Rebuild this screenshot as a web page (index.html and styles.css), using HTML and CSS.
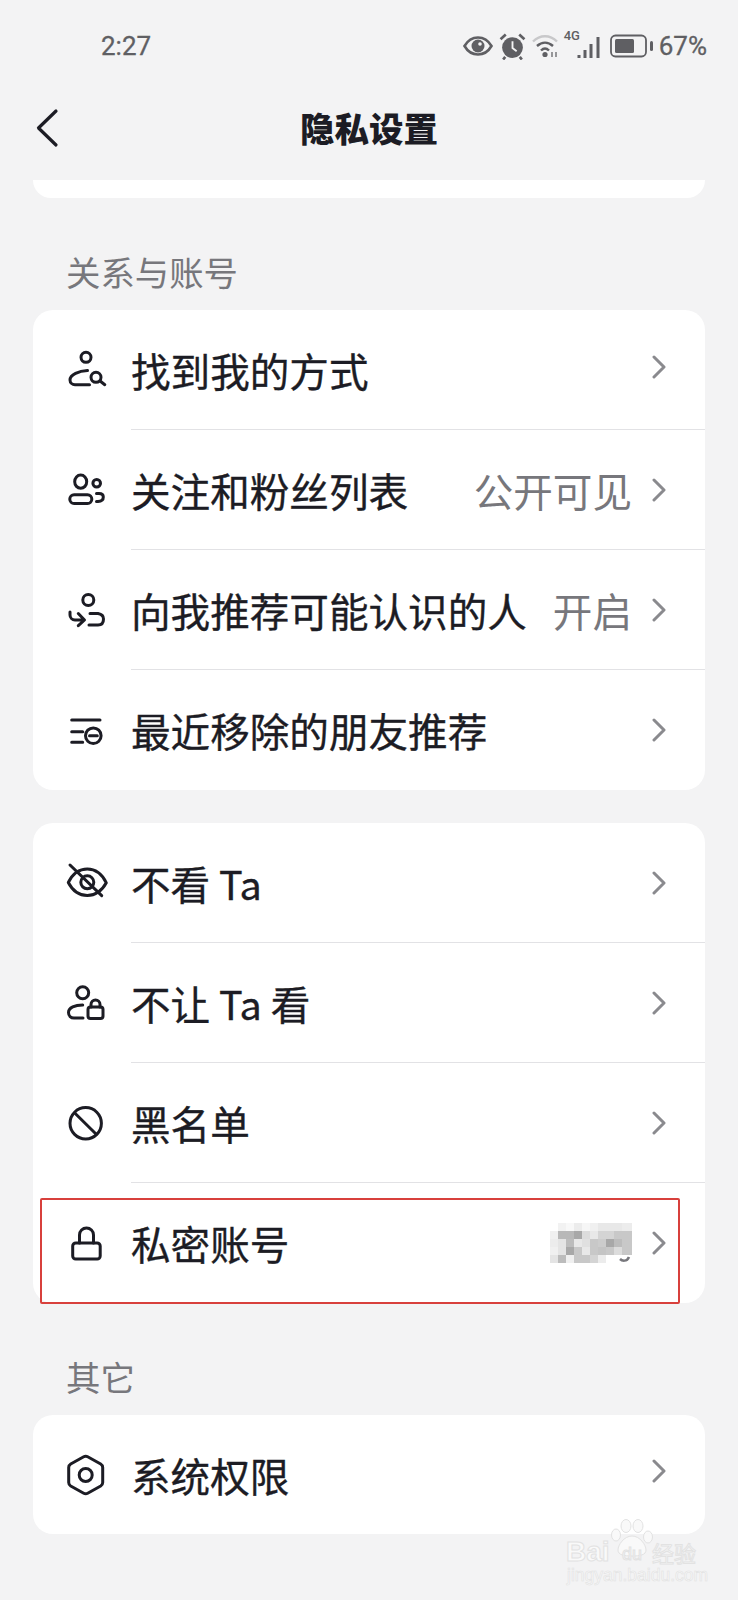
FILE: index.html
```html
<!DOCTYPE html>
<html lang="zh-CN">
<head>
<meta charset="utf-8">
<title>隐私设置</title>
<link rel="stylesheet" href="styles.css">
</head>
<body>
<div class="page">
  <header class="status">
    <span class="time">2:27</span>
    <div class="status-icons">
      <svg class="si-eye" viewBox="0 0 30 22" width="30" height="22"><path d="M1.5 11C5 5 9.500 2.500 15 2.500S25 5 28.500 11C25 17 20.500 19.500 15 19.500S5 17 1.500 11Z" fill="none" stroke="#5f5f63" stroke-width="2.600"/><circle cx="15" cy="11" r="6.500" fill="#5f5f63"/><circle cx="17" cy="9" r="1.800" fill="#f3f3f4"/></svg>
      <svg class="si-alarm" viewBox="0 0 26 26" width="27" height="27"><circle cx="13" cy="14" r="10" fill="#5f5f63"/><path d="M13 8v6.500l4 3" fill="none" stroke="#f3f3f4" stroke-width="1.800"/><path d="M1.500 6l5-4.500M24.500 6l-5-4.500M6 23l-2 2.500M20 23l2 2.500" stroke="#5f5f63" stroke-width="2.600" fill="none"/></svg>
      <svg class="si-wifi" viewBox="0 0 27 24" width="27" height="24"><path d="M1 7.500C8 .5 18 .5 25 7.500" fill="none" stroke="#c8c8ca" stroke-width="2.400"/><path d="M5 12C10 7.500 16 7.500 21 12M9 16.500C11.500 14 14.500 14 17 16.500" fill="none" stroke="#5f5f63" stroke-width="2.400"/><circle cx="13" cy="20.500" r="2.600" fill="#5f5f63"/><path d="M20 18v5M24 18v5" stroke="#6f6f73" stroke-width="1.400"/></svg>
      <div class="si-cell">
        <span class="si-4g">4G</span>
        <svg viewBox="0 0 24 24" width="24" height="24"><path d="M2 20v3M8 15v8M14 9v14M21 2v21" stroke="#5f5f63" stroke-width="3" fill="none"/></svg>
      </div>
      <svg class="si-batt" viewBox="0 0 44 24" width="44" height="24"><rect x="1" y="1.500" width="35" height="21" rx="4.500" fill="none" stroke="#5f5f63" stroke-width="1.800"/><rect x="5" y="5" width="19" height="14" rx="1.500" fill="#5f5f63"/><rect x="40" y="7" width="3" height="10" rx="1.500" fill="#5f5f63"/></svg>
      <span class="pct">67%</span>
    </div>
  </header>

  <nav class="nav">
    <svg class="back" viewBox="0 0 24 40" width="24" height="40"><path d="M21 3L3.500 20L21 37" fill="none" stroke="#1c1c24" stroke-width="3.200" stroke-linecap="round" stroke-linejoin="round"/></svg>
    <h1 class="title">隐私设置</h1>
  </nav>

  <div class="card-tail"></div>

  <h2 class="label label-first">关系与账号</h2>
  <section class="card">
    <div class="row">
      <svg class="icon" viewBox="0 0 40 40"><circle cx="19" cy="7.300" r="5"/><path d="M20.500 20.500C12 21 3 24.500 3 30C3 33 5.500 34.700 8 34.700H22.500"/><circle cx="29" cy="27.300" r="5"/><path d="M32.800 30.800L37.800 34.700"/></svg>
      <div class="row-body"><span class="row-text">找到我的方式</span><svg class="chev chev-first" viewBox="0 0 14 24"><path d="M2 2L12 12L2 22"/></svg></div>
    </div>
    <div class="row">
      <svg class="icon" viewBox="0 0 40 40"><ellipse cx="13.700" cy="11.700" rx="6" ry="6.600"/><rect x="2.800" y="24.800" width="22" height="8.700" rx="4.300"/><circle cx="29.700" cy="13.300" r="3.800"/><path d="M29.500 23.500H32Q36.300 23.500 36.300 27Q36.300 31.300 31 31.500H29.500"/></svg>
      <div class="row-body"><span class="row-text">关注和粉丝列表</span><span class="row-val">公开可见</span><svg class="chev" viewBox="0 0 14 24"><path d="M2 2L12 12L2 22"/></svg></div>
    </div>
    <div class="row">
      <svg class="icon" viewBox="0 0 40 40"><circle cx="21.300" cy="10" r="5.500"/><path d="M23 23.500H31Q36.500 24.500 36.500 29Q36.500 35 31 35H22"/><path d="M3 22V25A5 5 0 0 0 8 30H17M11.300 23.500L17.500 30L11.300 35.700"/></svg>
      <div class="row-body"><span class="row-text">向我推荐可能认识的人</span><span class="row-val">开启</span><svg class="chev" viewBox="0 0 14 24"><path d="M2 2L12 12L2 22"/></svg></div>
    </div>
    <div class="row">
      <svg class="icon" viewBox="0 0 40 40"><path d="M4.700 10H33M4.700 21.700H15.700M4.700 32.300H15.700"/><circle cx="26.300" cy="25.700" r="7.800"/><path d="M22.500 25.700H30.300"/></svg>
      <div class="row-body row-body-last"><span class="row-text">最近移除的朋友推荐</span><svg class="chev" viewBox="0 0 14 24"><path d="M2 2L12 12L2 22"/></svg></div>
    </div>
  </section>

  <section class="card card-second">
    <div class="row">
      <svg class="icon" viewBox="0 0 40 40"><path d="M1.300 19.500C6 10 12.500 6 20.300 6S34.500 10 39.300 19.800C34.500 28.500 28 32.500 20.300 32.500S6 28.500 1.300 19.500Z"/><circle cx="20.300" cy="19.300" r="6.500"/><path d="M3 2L34.700 32.700"/></svg>
      <div class="row-body"><span class="row-text">不看 Ta</span><svg class="chev" viewBox="0 0 14 24"><path d="M2 2L12 12L2 22"/></svg></div>
    </div>
    <div class="row">
      <svg class="icon" viewBox="0 0 40 40"><circle cx="15.700" cy="9.700" r="6"/><path d="M15.700 22C8 22 1.500 24.500 1.500 29.500C1.500 33 4 35 7 35H16"/><rect x="21" y="24" width="15" height="11.500" rx="2.500"/><path d="M24 24V21.500A4.500 4.500 0 0 1 33 21.500V24"/></svg>
      <div class="row-body"><span class="row-text">不让 Ta 看</span><svg class="chev" viewBox="0 0 14 24"><path d="M2 2L12 12L2 22"/></svg></div>
    </div>
    <div class="row">
      <svg class="icon" viewBox="0 0 40 40"><circle cx="18.700" cy="20.300" r="15.700"/><path d="M8 10.300L29 31"/></svg>
      <div class="row-body"><span class="row-text">黑名单</span><svg class="chev" viewBox="0 0 14 24"><path d="M2 2L12 12L2 22"/></svg></div>
    </div>
    <div class="row">
      <svg class="icon" viewBox="0 0 40 40"><rect x="5.700" y="20" width="27.500" height="16" rx="3"/><path d="M12.500 20V12A7 7 0 0 1 26.500 12V20"/></svg>
      <div class="row-body row-body-last">
        <span class="row-text">私密账号</span>
        <svg class="mosaic" viewBox="0 0 82 40" width="82" height="40" aria-hidden="true">
          <g>
            <rect x="8" y="0" width="8" height="8" fill="#f2f2f2"/><rect x="16" y="0" width="8" height="8" fill="#f8f8f8"/><rect x="24" y="0" width="8" height="8" fill="#ececec"/><rect x="32" y="0" width="8" height="8" fill="#f6f6f6"/><rect x="40" y="0" width="8" height="8" fill="#f0f0f0"/><rect x="48" y="0" width="8" height="8" fill="#e8e8e8"/><rect x="56" y="0" width="8" height="8" fill="#e8e8e8"/><rect x="64" y="0" width="8" height="8" fill="#e8e8e8"/><rect x="72" y="0" width="10" height="8" fill="#ececec"/>
            <rect x="0" y="8" width="8" height="8" fill="#f0f0f0"/><rect x="8" y="8" width="8" height="8" fill="#b8b8b8"/><rect x="16" y="8" width="8" height="8" fill="#b8b8b8"/><rect x="24" y="8" width="8" height="8" fill="#a8a8a8"/><rect x="32" y="8" width="8" height="8" fill="#dcdcdc"/><rect x="40" y="8" width="8" height="8" fill="#e8e8e8"/><rect x="48" y="8" width="8" height="8" fill="#d4d4d4"/><rect x="56" y="8" width="8" height="8" fill="#d4d4d4"/><rect x="64" y="8" width="8" height="8" fill="#c8c8c8"/><rect x="72" y="8" width="10" height="8" fill="#c8c8c8"/>
            <rect x="0" y="16" width="8" height="8" fill="#ececec"/><rect x="8" y="16" width="8" height="8" fill="#e4e4e4"/><rect x="16" y="16" width="8" height="8" fill="#bcbcbc"/><rect x="24" y="16" width="8" height="8" fill="#e8e8e8"/><rect x="32" y="16" width="8" height="8" fill="#e0e0e0"/><rect x="40" y="16" width="8" height="8" fill="#c8c8c8"/><rect x="48" y="16" width="8" height="8" fill="#cccccc"/><rect x="56" y="16" width="8" height="8" fill="#a8a8a8"/><rect x="64" y="16" width="8" height="8" fill="#bcbcbc"/><rect x="72" y="16" width="10" height="8" fill="#c8c8c8"/>
            <rect x="0" y="24" width="8" height="8" fill="#f0f0f0"/><rect x="8" y="24" width="8" height="8" fill="#e4e4e4"/><rect x="16" y="24" width="8" height="8" fill="#a8a8a8"/><rect x="24" y="24" width="8" height="8" fill="#c8c8c8"/><rect x="32" y="24" width="8" height="8" fill="#e8e8e8"/><rect x="40" y="24" width="8" height="8" fill="#c8c8c8"/><rect x="48" y="24" width="8" height="8" fill="#c4c4c4"/><rect x="56" y="24" width="8" height="8" fill="#c8c8c8"/><rect x="64" y="24" width="8" height="8" fill="#dcdcdc"/><rect x="72" y="24" width="10" height="8" fill="#c8c8c8"/>
            <rect x="0" y="32" width="8" height="8" fill="#e4e4e4"/><rect x="8" y="32" width="8" height="8" fill="#bcbcbc"/><rect x="16" y="32" width="8" height="8" fill="#f0f0f0"/><rect x="24" y="32" width="8" height="8" fill="#c8c8c8"/><rect x="32" y="32" width="8" height="8" fill="#c8c8c8"/><rect x="40" y="32" width="8" height="8" fill="#d4d4d4"/><rect x="48" y="32" width="8" height="8" fill="#ececec"/>
            <path d="M70 36C72 38 77 39 79 34" fill="none" stroke="#77777c" stroke-width="2.500"/>
          </g>
        </svg>
        <svg class="chev" viewBox="0 0 14 24"><path d="M2 2L12 12L2 22"/></svg>
      </div>
      <div class="highlight"></div>
    </div>
  </section>

  <h2 class="label label-other">其它</h2>
  <section class="card card-short">
    <div class="row">
      <svg class="icon" viewBox="0 0 40 40"><path d="M16.700 1.800Q18.700 .700 20.700 1.800L33.700 9Q35.700 10.200 35.700 12.500V27.500Q35.700 29.800 33.700 31L20.700 38.200Q18.700 39.300 16.700 38.200L3.700 31Q1.700 29.800 1.700 27.500V12.500Q1.700 10.200 3.700 9Z"/><circle cx="18.700" cy="20" r="6.500"/></svg>
      <div class="row-body row-body-last"><span class="row-text">系统权限</span><svg class="chev chev-short" viewBox="0 0 14 24"><path d="M2 2L12 12L2 22"/></svg></div>
    </div>
  </section>

  <div class="watermark" aria-hidden="true">
    <svg class="wm-paw" viewBox="0 0 44 38" width="44" height="38"><g fill="#f9f9f9" stroke="#e2e2e2" stroke-width="1"><ellipse cx="6" cy="16" rx="4.500" ry="6"/><ellipse cx="16" cy="7" rx="5" ry="6.500"/><ellipse cx="28" cy="7" rx="5" ry="6.500"/><ellipse cx="38" cy="18" rx="4.500" ry="6"/><path d="M22 17C14 17 8 26 8 31C8 36 14 37 22 37S36 36 36 31C36 26 30 17 22 17Z"/></g></svg>
    <div class="wm-top"><span class="wm-bai">Bai</span><span class="wm-du">du</span><span class="wm-jy">经验</span></div>
    <div class="wm-url">jingyan.baidu.com</div>
  </div>
</div>
</body>
</html>
```

FILE: styles.css
```css
* { box-sizing: border-box; }
html, body { margin: 0; padding: 0; background: #f3f3f4; }
.page {
  position: relative;
  width: 738px;
  height: 1600px;
  overflow: hidden;
  font-family: "Noto Sans CJK SC", "Noto Sans", sans-serif;
  color: #1c1c24;
}
.status {
  height: 92px;
  display: flex;
  align-items: center;
  justify-content: space-between;
  padding: 0 31px 0 101px;
  font-family: Roboto, "Noto Sans", sans-serif;
  font-size: 26px;
  font-weight: 400;
  color: #5f5f63;
  -webkit-text-stroke: .3px #5f5f63;
}
.status-icons { display: flex; align-items: center; }
.si-alarm { margin-left: 6px; }
.si-wifi { margin-left: 6px; }
.si-cell { display: flex; align-items: flex-end; margin-left: 5px; position: relative; width: 37px; height: 26px; justify-content: flex-end; }
.si-4g { position: absolute; left: 0; top: -4px; font-size: 13px; line-height: 14px; font-weight: 500; -webkit-text-stroke: 0; }
.si-batt { margin-left: 9px; }
.pct { margin-left: 5px; }
.nav {
  height: 74px;
  display: grid;
  grid-template-columns: 1fr auto 1fr;
  align-items: center;
  padding-left: 35px;
  margin-bottom: 14px;
}
.back { display: block; margin-bottom: 2px; }
.title {
  margin: 0 0 4px -35px;
  font-size: 34.500px;
  font-weight: 900;
  line-height: 48px;
}
.nav .back { grid-column: 1; grid-row: 1; }
.nav .title { grid-column: 2; grid-row: 1; }
.card-tail {
  height: 18px;
  margin: 0 33px;
  background: #fff;
  border-radius: 0 0 18px 18px;
}
.label {
  margin: 0;
  height: 40px;
  padding-left: 66px;
  font-size: 34.400px;
  font-weight: 400;
  line-height: 40px;
  color: #77777c;
}
.label-first { margin-top: 53px; margin-bottom: 19px; }
.label-other { margin-top: 53px; margin-bottom: 19px; }
.card {
  margin: 0 33px;
  background: #fff;
  border-radius: 20px;
}
.card-second { margin-top: 33px; }
.row {
  position: relative;
  height: 120px;
  display: flex;
  align-items: center;
  padding-left: 34px;
}
.card-short .row { height: 119px; }
.icon {
  flex: none;
  width: 40px;
  height: 40px;
  margin-right: 24px;
  overflow: visible;
  fill: none;
  stroke: #1c1c24;
  stroke-width: 3;
  stroke-linecap: round;
  stroke-linejoin: round;
}
.row-body {
  flex: 1;
  height: 100%;
  display: flex;
  align-items: center;
  padding-right: 39px;
  border-bottom: 1.500px solid #e2e2e5;
}
.row-body-last { border-bottom: 0; }
.row-text {
  flex: 1;
  font-size: 39.600px;
  font-weight: 400;
  -webkit-text-stroke: .35px #1c1c24;
  line-height: 50px;
  white-space: nowrap;
}
.row-val {
  font-size: 39.600px;
  line-height: 50px;
  color: #77777c;
  margin-right: 20px;
  white-space: nowrap;
}
.chev {
  flex: none;
  width: 14px;
  height: 24px;
  fill: none;
  stroke: #8a8a8e;
  stroke-width: 3;
  stroke-linecap: round;
  stroke-linejoin: round;
}
.chev-first { margin-top: -6px; }
.chev-short { margin-top: -8px; }
.mosaic { flex: none; margin-right: 20px; }
.highlight {
  position: absolute;
  left: 7px;
  top: 15px;
  width: 640px;
  height: 106px;
  border: 2px solid #d8403c;
  border-radius: 2px;
  pointer-events: none;
}
.watermark {
  position: absolute;
  left: 566px;
  top: 1519px;
  width: 134px;
  height: 66px;
}
.wm-paw { position: absolute; left: 44px; top: 0; }
.wm-top {
  position: absolute;
  left: 0;
  top: 16px;
  display: flex;
  align-items: center;
  font-family: "Liberation Sans", sans-serif;
  color: #f9f9f9;
  -webkit-text-stroke: 1px #e2e2e2;
  line-height: 30px;
}
.wm-bai { font-size: 28px; font-weight: 700; width: 46px; }
.wm-du { font-size: 18px; width: 40px; text-align: center; padding-top: 4px; }
.wm-jy { font-family: "Noto Sans CJK SC", sans-serif; font-size: 22px; width: 46px; white-space: nowrap; }
.wm-url {
  position: absolute;
  left: 1px;
  top: 46px;
  font-family: "Liberation Sans", sans-serif;
  font-size: 17.500px;
  line-height: 20px;
  color: #f9f9f9;
  -webkit-text-stroke: .6px #e2e2e2;
  white-space: nowrap;
}
```
